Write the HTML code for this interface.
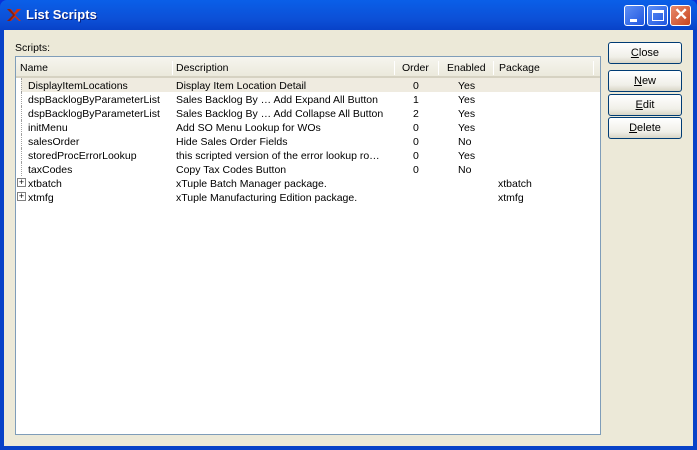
<!DOCTYPE html>
<html><head><style>
*{margin:0;padding:0;box-sizing:border-box}
body{width:697px;height:450px;overflow:hidden;font-family:"Liberation Sans",sans-serif;font-size:10.5px;color:#000;background:#0831d9}
.win{position:absolute;left:0;top:0;width:697px;height:450px;background:linear-gradient(#0a5fe8,#0c4fd6 20px,#0842c8 30px);border-radius:7px 7px 0 0}
.title{position:absolute;left:26px;top:7px;color:#fff;font-weight:bold;font-size:13px;text-shadow:1px 1px #0a1f7a}
.body{position:absolute;left:4px;top:30px;width:689px;height:416px;background:#ece9d8}
.tb{position:absolute;top:5px;width:21px;height:21px;border:1px solid #fff;border-radius:3px;background:linear-gradient(135deg,#5d8ff5,#2056e0)}
.abs{position:absolute;white-space:nowrap}
.list{position:absolute;left:15px;top:56px;width:586px;height:379px;background:#fff;border:1px solid #7f9db9}
.hdr{position:absolute;left:0;top:0;width:584px;height:21px;background:linear-gradient(#f6f5ef,#ebe9dc);border-bottom:2px solid #d6d2c2}
.sep{position:absolute;top:4px;width:1px;height:14px;background:#c7c5b2;border-right:1px solid #fff}
.btn{position:absolute;left:608px;width:74px;height:22px;border:1px solid #003c74;border-radius:3px;background:linear-gradient(#fff,#f0efe8 70%,#d8d5c6);text-align:center;line-height:20px;font-size:11px}
.row{position:absolute;left:0;height:14px;width:584px;line-height:16px}
.row span{position:absolute;white-space:nowrap}
.dot{position:absolute;left:5px;top:0;width:1px;height:14px;border-left:1px dotted #a0a0a0}
.plus{position:absolute;left:1px;top:2px;width:9px;height:9px;border:1px solid #808080;background:#fff;font-size:9px;line-height:7px;text-align:center}
</style></head><body>
<div class="win">
<svg class="abs" style="left:6px;top:8px" width="16" height="14"><path d="M1 1 L7 7 L1 13 L5 13 L9 9 L13 13 L15 13 L9 7 L15 1 L11 1 L8 5 L5 1Z" fill="#d03010"/><path d="M1 1 L7 7 L1 13 L4 13 L9 7 L4 1Z" fill="#8a1f10"/></svg>
<div class="title">List Scripts</div>
<div class="tb" style="left:624px"><div class="abs" style="left:5px;top:13px;width:7px;height:3px;background:#fff"></div></div>
<div class="tb" style="left:647px"><div class="abs" style="left:4px;top:4px;width:12px;height:11px;border:1px solid #fff;border-top-width:3px"></div></div>
<div class="tb" style="left:670px;background:linear-gradient(135deg,#e88a6c,#c84520)"><div class="abs" style="left:3px;top:-1px;color:#fff;font-size:17px;font-weight:bold">✕</div></div>
<div class="body"></div>
<div class="abs" style="left:15px;top:42px">Scripts:</div>
<div class="list">
<div class="hdr">
<span class="abs" style="left:4px;top:5px">Name</span>
<div class="sep" style="left:156px"></div><span class="abs" style="left:160px;top:5px">Description</span>
<div class="sep" style="left:378px"></div><span class="abs" style="left:386px;top:5px">Order</span>
<div class="sep" style="left:422px"></div><span class="abs" style="left:431px;top:5px">Enabled</span>
<div class="sep" style="left:477px"></div><span class="abs" style="left:483px;top:5px">Package</span>
<div class="sep" style="left:577px"></div>
</div>
<div class="row" style="top:21px;background:#efebe0;width:579px;left:5px"></div>
<div class="row" style="top:21px"><div class="dot"></div><span style="left:12px">DisplayItemLocations</span><span style="left:160px">Display Item Location Detail</span><span style="left:397px">0</span><span style="left:442px">Yes</span></div>
<div class="row" style="top:35px"><div class="dot"></div><span style="left:12px">dspBacklogByParameterList</span><span style="left:160px">Sales Backlog By … Add Expand All Button</span><span style="left:397px">1</span><span style="left:442px">Yes</span></div>
<div class="row" style="top:49px"><div class="dot"></div><span style="left:12px">dspBacklogByParameterList</span><span style="left:160px">Sales Backlog By … Add Collapse All Button</span><span style="left:397px">2</span><span style="left:442px">Yes</span></div>
<div class="row" style="top:63px"><div class="dot"></div><span style="left:12px">initMenu</span><span style="left:160px">Add SO Menu Lookup for WOs</span><span style="left:397px">0</span><span style="left:442px">Yes</span></div>
<div class="row" style="top:77px"><div class="dot"></div><span style="left:12px">salesOrder</span><span style="left:160px">Hide Sales Order Fields</span><span style="left:397px">0</span><span style="left:442px">No</span></div>
<div class="row" style="top:91px"><div class="dot"></div><span style="left:12px">storedProcErrorLookup</span><span style="left:160px">this scripted version of the error lookup ro…</span><span style="left:397px">0</span><span style="left:442px">Yes</span></div>
<div class="row" style="top:105px"><div class="dot"></div><span style="left:12px">taxCodes</span><span style="left:160px">Copy Tax Codes Button</span><span style="left:397px">0</span><span style="left:442px">No</span></div>
<div class="row" style="top:119px"><div class="plus">+</div><span style="left:12px">xtbatch</span><span style="left:160px">xTuple Batch Manager package.</span><span style="left:482px">xtbatch</span></div>
<div class="row" style="top:133px"><div class="plus">+</div><span style="left:12px">xtmfg</span><span style="left:160px">xTuple Manufacturing Edition package.</span><span style="left:482px">xtmfg</span></div>
</div>
<div class="btn" style="top:42px"><u>C</u>lose</div>
<div class="btn" style="top:70px"><u>N</u>ew</div>
<div class="btn" style="top:94px"><u>E</u>dit</div>
<div class="btn" style="top:117px"><u>D</u>elete</div>
</div>
</body></html>
